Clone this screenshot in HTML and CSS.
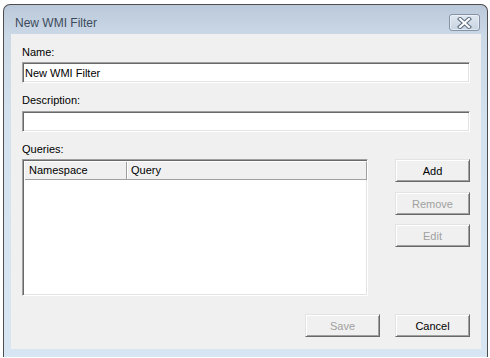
FILE: index.html
```html
<!doctype html>
<html lang="en">
<head>
    <meta charset="UTF-8">
    <title>New WMI Filter</title>
    <link rel="stylesheet" href="styles.css">
</head>
<body>
    <div class="window">
        <div class="titlebar">
            <span class="title">New WMI Filter</span>
            <button class="close" title="Close">
                <svg width="15" height="12" viewBox="0 0 15 12">
                    <path d="M3 2 L12 10 M12 2 L3 10" stroke="#5b6a7e" stroke-width="4.2" stroke-linecap="square" fill="none"/>
                    <path d="M3 2 L12 10 M12 2 L3 10" stroke="#ffffff" stroke-width="2.2" stroke-linecap="square" fill="none"/>
                </svg>
            </button>
        </div>

        <div class="client">
            <label class="label" for="name">Name:</label>
            <input class="field" id="name" type="text" value="New WMI Filter">

            <label class="label label-gap" for="desc">Description:</label>
            <input class="field field-desc" id="desc" type="text">

            <div class="label label-gap">Queries:</div>
            <div class="queries">
                <div class="listview">
                    <div class="list-header">
                        <div class="col col-ns">Namespace</div>
                        <div class="col col-query">Query</div>
                    </div>
                </div>
                <div class="side-buttons">
                    <button class="btn btn-add">Add</button>
                    <button class="btn" disabled>Remove</button>
                    <button class="btn" disabled>Edit</button>
                </div>
            </div>

            <div class="footer">
                <button class="btn" disabled>Save</button>
                <button class="btn">Cancel</button>
            </div>
        </div>
    </div>
</body>
</html>
```

FILE: styles.css
```css
body {
    margin: 0;
    background: #ffffff;
    font-family: "Liberation Sans", Arial, sans-serif;
}
.window {
    box-sizing: border-box;
    width: 485px;
    height: 353px;
    margin: 4px 0 0 3px;
    border: 1px solid #4e4e4e;
    border-bottom: none;
    border-radius: 7px 7px 0 0;
    background: linear-gradient(#bac9da 0, #cbd8e6 30px, #d4e1ef 120px, #d8e5f2 100%);
    box-shadow: 0 1px 0 #4e4e4e;
}
.titlebar {
    display: flex;
    justify-content: space-between;
    align-items: flex-start;
    height: 29px;
    padding: 0 7px 0 11px;
}
.title {
    margin-top: 11px;
    font-size: 12px;
    line-height: 14px;
    color: #3e4b5c;
}
.close {
    box-sizing: border-box;
    width: 31px;
    height: 17px;
    margin-top: 9px;
    padding: 0;
    display: flex;
    align-items: center;
    justify-content: center;
    border: 1px solid #8593a8;
    border-radius: 3px;
    background: linear-gradient(#dfe7f0, #c8d4e2);
    box-shadow: inset 0 0 0 1px rgba(255, 255, 255, 0.45);
}
.client {
    box-sizing: border-box;
    height: 315px;
    margin: 0 6px 0 7px;
    padding: 12px 11px 0 11px;
    background: #f0f0f0;
    display: flex;
    flex-direction: column;
    font-size: 11px;
    color: #000;
}
.label {
    display: block;
    line-height: 13px;
    height: 13px;
    margin-bottom: 3px;
}
.label-gap {
    margin-top: 11px;
}
.field {
    box-sizing: border-box;
    width: 448px;
    height: 21px;
    margin: 0;
    padding: 0 2px;
    font: 11px "Liberation Sans", Arial, sans-serif;
    color: #000;
    background: #fff;
    border: 1px solid;
    border-color: #a0a0a0 #ffffff #ffffff #a0a0a0;
    box-shadow: inset 1px 1px 0 #696969, inset -1px -1px 0 #e3e3e3;
    outline: none;
}
.field-desc {
    margin-top: 1px;
}
.queries {
    display: flex;
    gap: 27px;
}
.listview {
    box-sizing: border-box;
    width: 346px;
    height: 137px;
    padding: 2px;
    background: #fff;
    border: 1px solid;
    border-color: #a0a0a0 #ffffff #ffffff #a0a0a0;
    box-shadow: inset 1px 1px 0 #696969, inset -1px -1px 0 #e3e3e3;
}
.list-header {
    display: flex;
    height: 18px;
    width: 342px;
    box-sizing: border-box;
    background: #f0f0f0;
    border-bottom: 1px solid #a0a0a0;
}
.col {
    box-sizing: border-box;
    padding-left: 4px;
    line-height: 17px;
    border-right: 1px solid #a0a0a0;
    box-shadow: 1px 0 0 #ffffff;
}
.col-ns {
    width: 102px;
}
.col-query {
    width: 240px;
}
.side-buttons {
    display: flex;
    flex-direction: column;
    gap: 9px;
}
.btn-add {
    margin-bottom: 1px;
}
.btn {
    box-sizing: border-box;
    width: 75px;
    height: 23px;
    padding: 0;
    font: 11px "Liberation Sans", Arial, sans-serif;
    color: #000;
    background: #f0f0f0;
    border: 1px solid;
    border-color: #e3e3e3 #696969 #696969 #e3e3e3;
    box-shadow: inset 1px 1px 0 #ffffff, inset -1px -1px 0 #a0a0a0;
}
.btn:disabled {
    color: #a0a0a0;
}
.footer {
    display: flex;
    justify-content: flex-end;
    gap: 15px;
    margin-top: 18px;
}
```
